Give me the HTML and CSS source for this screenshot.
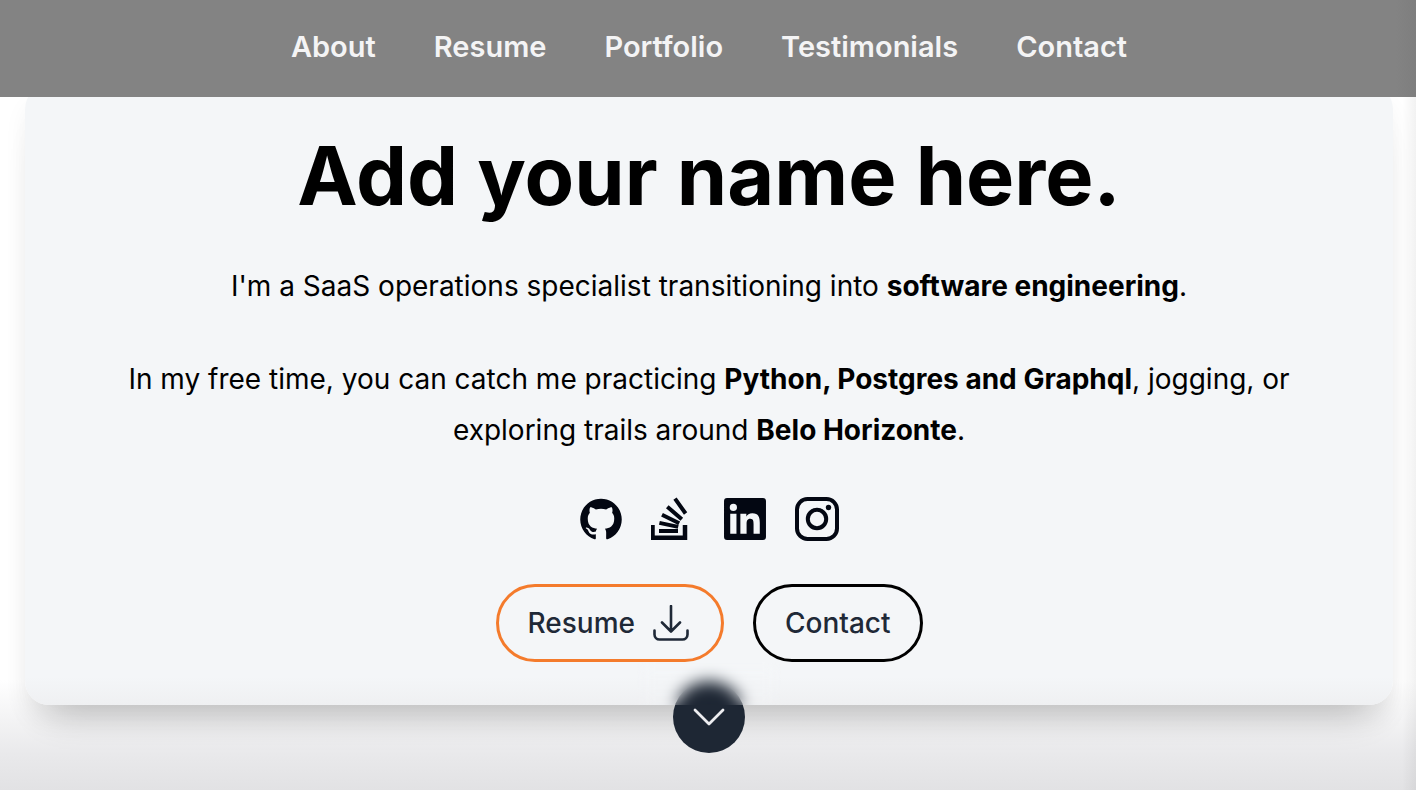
FILE: index.html
```html
<!DOCTYPE html>
<html lang="en">
<head>
<meta charset="utf-8">
<meta name="viewport" content="width=device-width, initial-scale=1">
<title>Portfolio</title>
<link rel="stylesheet" href="styles.css">
</head>
<body>
<header class="site-header">
  <nav class="nav" aria-label="Main">
    <a href="#about">About</a>
    <a href="#resume">Resume</a>
    <a href="#portfolio">Portfolio</a>
    <a href="#testimonials">Testimonials</a>
    <a href="#contact">Contact</a>
  </nav>
</header>
<main class="hero">
  <section class="card">
    <h1 class="title">Add your name here.</h1>
    <p class="text">I'm a SaaS operations specialist transitioning into <strong>software engineering</strong>.</p>
    <p class="text">In my free time, you can catch me practicing <strong>Python, Postgres and Graphql</strong>, jogging, or exploring trails around <strong>Belo Horizonte</strong>.</p>
    <div class="social">
      <a href="#github" aria-label="GitHub"><svg viewBox="0 0 128 128"><path fill-rule="evenodd" d="M64 5.103c-33.347 0-60.388 27.035-60.388 60.388 0 26.682 17.303 49.317 41.297 57.303 3.017.56 4.125-1.31 4.125-2.905 0-1.44-.056-6.197-.082-11.243-16.8 3.653-20.345-7.125-20.345-7.125-2.747-6.98-6.705-8.836-6.705-8.836-5.48-3.748.413-3.67.413-3.67 6.063.425 9.257 6.223 9.257 6.223 5.386 9.23 14.127 6.562 17.573 5.02.542-3.903 2.107-6.568 3.834-8.076-13.413-1.525-27.514-6.704-27.514-29.843 0-6.593 2.36-11.98 6.223-16.21-.628-1.52-2.695-7.662.584-15.98 0 0 5.07-1.623 16.61 6.19C53.7 35 58.867 34.327 64 34.304c5.13.023 10.3.694 15.127 2.033 11.526-7.813 16.59-6.19 16.59-6.19 3.287 8.317 1.22 14.46.593 15.98 3.872 4.23 6.215 9.617 6.215 16.21 0 23.194-14.127 28.3-27.574 29.796 2.167 1.874 4.097 5.55 4.097 11.183 0 8.08-.07 14.583-.07 16.572 0 1.607 1.088 3.49 4.148 2.897 23.98-7.994 41.263-30.622 41.263-57.294C124.388 32.14 97.35 5.104 64 5.104z"/></svg></a>
      <a href="#stackoverflow" aria-label="Stack Overflow"><svg viewBox="0 0 44 44"><path fill="none" stroke="currentColor" stroke-width="4.500" d="M1.500 28v12.700h32.500V28"/><path fill="none" stroke="currentColor" stroke-width="4" d="M8 34h19M8.400 25.900l18.800 4M11 17.700l17.200 8.600M16.300 9.700l14.500 12.600M24 1.700l10.600 14.800"/></svg></a>
      <a href="#linkedin" aria-label="LinkedIn"><svg viewBox="0 0 128 128"><path fill-rule="evenodd" d="M116 3H12a8.910 8.910 0 00-9 8.800v104.420a8.910 8.910 0 009 8.780h104a8.930 8.930 0 009-8.810V11.770A8.930 8.930 0 00116 3zM39.170 107H21.060V48.730h18.110zm-9-66.210a10.500 10.500 0 1110.490-10.500 10.500 10.500 0 01-10.540 10.480zM107 107H88.890V78.650c0-6.750-.12-15.440-9.410-15.440s-10.870 7.360-10.870 15V107H50.530V48.730h17.360v8h.24c2.420-4.580 8.320-9.410 17.130-9.410C103.600 47.280 107 59.350 107 75z"/></svg></a>
      <a href="#instagram" aria-label="Instagram"><svg viewBox="0 0 44 44"><rect x="2" y="2" width="40" height="40" rx="10.500" fill="none" stroke="currentColor" stroke-width="4"/><circle cx="22" cy="22" r="9.200" fill="none" stroke="currentColor" stroke-width="4"/><circle cx="33.500" cy="10.500" r="2.700"/></svg></a>
    </div>
    <div class="actions">
      <a class="button button-accent" href="#cv">Resume
        <svg viewBox="0 0 36 36" aria-hidden="true"><path d="M18 1v25M9 17.500l9 9 9-9M1.500 25.500v4a5 5 0 005 5h23a5 5 0 005-5v-4"/></svg>
      </a>
      <a class="button" href="#contact">Contact</a>
    </div>
  </section>
  <a class="scroll-down" href="#about" aria-label="Scroll down"><svg viewBox="0 0 36 36"><path d="M4 11l14 14 14-14"/></svg></a>
  <div class="frost"></div>
</main>
</body>
</html>
```
FILE: styles.css
```css
* { box-sizing: border-box; }

body {
  margin: 0;
  min-height: 100vh;
  display: flex;
  flex-direction: column;
  font-family: Inter, "Liberation Sans", sans-serif;
  color: #000;
  background: #fff;
}

.site-header {
  position: relative;
  z-index: 1;
  padding: 23px 23px 26px 25px;
  background: linear-gradient(to left, #7e7e7e, #838383 20px);
}

.nav {
  display: flex;
  justify-content: center;
  gap: 58px;
  font-size: 29px;
  line-height: 48px;
  font-weight: 600;
}

.nav a { color: #f4f4f5; text-decoration: none; }

.hero {
  flex: 1;
  position: relative;
  overflow: hidden;
  padding: 0 23px 85px 25px;
  display: flex;
  flex-direction: column;
  background:
    linear-gradient(to left, rgba(0, 0, 0, 0.05), transparent 14px),
    linear-gradient(to top, #e2e2e4, #e9e9eb 36px, rgba(255, 255, 255, 0) 110px);
}

.card {
  flex: 1;
  margin-top: -12px;
  padding: 41px 96px 43px;
  border-radius: 24px;
  text-align: center;
  background: linear-gradient(to top, #eff0f2, #f4f6f8 28px);
  box-shadow: 0 30px 36px -24px rgba(0, 0, 0, 0.24), 0 16px 24px rgba(0, 0, 0, 0.05);
}

.title {
  margin: 0 0 35px;
  font-size: 81px;
  line-height: 100px;
  font-weight: 700;
}

.text {
  margin: 0 0 42px;
  font-size: 28px;
  line-height: 51px;
}

.text strong { font-weight: 700; }

.social {
  display: flex;
  justify-content: center;
  gap: 28px;
  margin-top: -1px;
  color: #030712;
}

.social a { display: flex; color: inherit; }

.social svg {
  width: 44px;
  height: 44px;
  fill: currentColor;
}

.actions {
  display: flex;
  justify-content: center;
  gap: 29px;
  margin-top: 43px;
}

.button {
  display: flex;
  align-items: center;
  gap: 18px;
  height: 78px;
  padding: 0 29px;
  border: 3px solid #000;
  border-radius: 39px;
  font-size: 28px;
  font-weight: 500;
  color: #1f2937;
  text-decoration: none;
}

.button-accent { border-color: #f47b2c; padding-right: 32px; }

.button svg {
  width: 36px;
  height: 36px;
  fill: none;
  stroke: currentColor;
  stroke-width: 2.600;
  stroke-linecap: round;
  stroke-linejoin: round;
}

.scroll-down {
  position: absolute;
  bottom: 37px;
  left: 50%;
  display: flex;
  align-items: center;
  justify-content: center;
  width: 72px;
  height: 72px;
  margin-left: -35px;
  border-radius: 50%;
  background: #1e2734;
}

.scroll-down svg {
  width: 36px;
  height: 36px;
  fill: none;
  stroke: #ededf0;
  stroke-width: 2.800;
  stroke-linecap: round;
  stroke-linejoin: round;
}

/* Blurs the part of the scroll button that overlaps the card. */
.frost {
  position: absolute;
  bottom: 85px;
  left: 50%;
  width: 144px;
  height: 43px;
  margin-left: -71px;
  backdrop-filter: blur(8px);
}
```
